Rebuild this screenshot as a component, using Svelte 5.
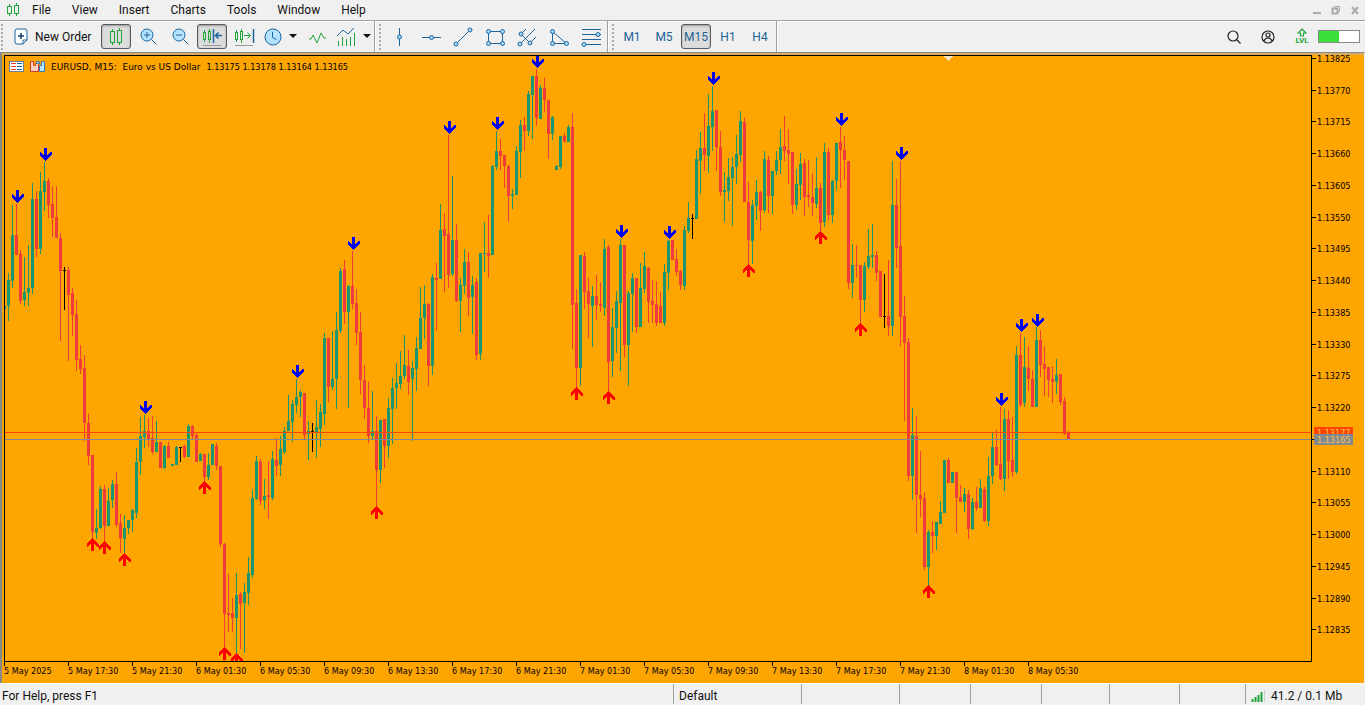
<script>
    let menus = ["File", "View", "Insert", "Charts", "Tools", "Window", "Help"]
    let timeframes = ["M1", "M5", "M15", "H1", "H4"]
    let panels = [98, 71, 71, 68, 70, 66]

    let activeFrame = "M15"
    let candleMode = true
    let shiftMode = true

    let drawTools = ["Vertical Line", "Horizontal Line", "Trendline", "Rectangle", "Pitchfork", "Triangle", "Fibonacci"]

    let prices = [
        [58, "1.13825"], [90, "1.13770"], [121, "1.13715"], [153, "1.13660"], [185, "1.13605"],
        [217, "1.13550"], [248, "1.13495"], [280, "1.13440"], [312, "1.13385"], [344, "1.13330"],
        [375, "1.13275"], [407, "1.13220"], [439, ""], [471, "1.13110"], [502, "1.13055"],
        [534, "1.13000"], [566, "1.12945"], [598, "1.12890"], [629, "1.12835"]
    ]

    let times = [
        "5 May 2025", "5 May 17:30", "5 May 21:30", "6 May 01:30", "6 May 05:30", "6 May 09:30",
        "6 May 13:30", "6 May 17:30", "6 May 21:30", "7 May 01:30", "7 May 05:30", "7 May 09:30",
        "7 May 13:30", "7 May 17:30", "7 May 21:30", "8 May 01:30", "8 May 05:30"
    ]

    // x centre and tip of each fractal
    let tops = [
        [17, 203], [45, 161], [145, 414], [297, 378], [353, 250], [449, 134], [497, 130], [537, 68],
        [621, 238], [669, 239], [713, 85], [841, 126], [901, 160], [1001, 406], [1021, 332], [1037, 327]
    ]
    let bottoms = [
        [92, 538], [104, 541], [124, 553], [204, 481], [224, 647], [236, 653], [376, 506], [576, 387],
        [608, 391], [748, 264], [820, 231], [860, 323], [928, 585]
    ]

    // colour (g up, r down, k doji), high, body top, body bottom, low; one candle every 4px
    let series = `
        g 306 306 309 309|g 273 280 306 321|g 205 235 281 288|r 204 235 255 255|r 250 254 301 304|g 257 292 300 306
        g 245 288 293 306|g 183 199 288 294|r 191 199 249 257|g 172 191 249 254|g 162 181 192 211|r 178 181 205 218
        r 186 204 218 237|r 186 217 238 238|r 233 238 271 341|k 267 270 271 310|r 267 270 295 361|r 288 293 315 336
        r 300 314 360 371|r 345 359 369 374|r 355 368 423 441|r 414 423 456 465|r 455 455 532 538|g 509 528 533 539
        g 486 489 528 529|r 485 489 526 542|g 488 501 526 526|g 480 484 500 508|r 472 484 525 527|r 514 523 538 553
        g 515 528 539 554|g 520 520 528 534|g 509 510 520 532|g 448 462 513 518|g 417 436 462 475|g 415 431 437 448
        r 418 431 439 447|r 416 438 452 454|g 421 442 452 452|r 442 442 468 468|g 445 446 468 469|r 442 446 458 458
        g 464 464 466 466|g 446 447 465 465|k 447 447 448 462|r 445 446 457 458|g 424 426 457 457|r 425 426 436 439
        r 433 435 462 462|g 453 454 461 461|r 454 454 477 482|g 453 465 477 480|g 444 444 465 465|r 443 446 466 470
        r 466 466 544 547|r 543 544 614 648|r 574 613 615 632|r 598 613 618 632|g 573 595 618 653|r 592 594 604 649
        g 583 592 603 653|g 557 573 593 605|g 490 498 575 578|g 456 461 499 500|r 459 462 501 505|g 479 496 500 509
        r 461 495 497 519|g 451 459 498 500|r 438 460 466 476|g 436 449 465 476|g 427 431 452 454|g 395 421 431 431
        g 400 404 422 442|g 379 397 405 413|g 390 392 397 417|r 393 393 435 440|g 421 431 434 460|k 423 431 432 452
        g 400 427 433 458|g 404 412 429 447|g 333 338 414 425|r 338 338 387 402|g 331 379 387 390|g 312 330 379 409
        g 268 271 331 333|r 260 269 312 324|g 285 286 312 408|r 251 286 304 309|r 289 303 333 345|r 312 332 380 394
        r 365 380 408 419|r 382 408 436 443|g 391 431 436 439|r 416 431 470 507|g 420 420 470 483|r 419 419 446 468
        g 398 408 446 458|g 378 388 409 444|g 363 383 388 409|g 351 376 384 389|g 335 365 376 379|r 350 366 382 395
        g 361 368 379 441|g 337 348 369 391|g 287 318 349 349|g 285 304 318 339|r 303 304 366 386|g 274 277 366 375
        r 263 278 280 331|g 204 230 279 279|r 213 229 236 292|r 135 234 275 288|g 176 240 274 276|r 224 240 301 302
        g 278 285 301 332|g 249 262 286 294|r 252 262 298 316|g 276 285 297 334|r 278 282 355 360|g 253 253 354 360
        g 222 253 254 272|r 215 253 256 278|g 165 166 255 255|g 131 151 167 170|r 139 151 156 170|r 155 155 166 188
        r 165 166 196 222|g 189 194 196 209|g 146 151 195 195|g 120 125 152 178|r 117 125 131 151|g 91 94 131 136
        g 76 76 95 139|r 69 76 118 126|g 85 88 119 119|r 78 88 100 112|r 100 100 134 159|g 116 117 134 140
        g 165 166 170 170|g 136 136 167 169|r 133 136 141 143|g 125 127 142 142|r 113 127 305 349|r 289 303 368 388
        g 255 255 368 386|r 252 256 292 309|r 278 291 304 338|g 286 296 306 347|r 275 296 305 320|r 282 304 306 312
        g 239 249 308 316|r 245 247 362 391|g 308 327 361 377|g 291 301 328 353|g 239 245 303 371|r 245 245 345 357
        g 291 293 345 386|g 273 278 294 332|r 278 278 327 333|g 263 288 327 327|g 252 266 289 293|r 267 268 302 323
        r 280 301 305 323|r 281 304 323 326|r 292 306 323 323|g 264 272 323 326|g 240 241 273 290|r 240 240 260 260
        r 249 259 272 276|r 270 271 285 290|g 226 230 286 290|g 202 218 231 233|k 214 218 219 239|g 150 159 219 219
        g 132 148 161 194|r 113 148 155 171|g 94 126 156 173|g 86 111 127 151|r 110 110 147 171|r 131 147 192 196
        g 172 190 192 222|g 158 177 191 201|g 157 167 178 226|g 135 154 167 184|g 111 121 155 162|r 118 122 202 202
        r 182 202 240 265|g 200 205 241 264|g 180 192 206 220|r 191 192 211 231|g 151 159 210 213|r 156 160 196 213
        g 171 171 196 214|g 151 160 171 175|g 129 147 160 174|r 116 146 151 161|r 129 150 154 184|r 152 152 205 214
        g 169 184 205 210|g 153 164 185 200|r 159 163 197 216|r 160 195 197 207|r 174 197 203 216|g 157 188 204 208
        r 183 188 223 232|g 143 152 222 227|r 148 152 215 220|g 180 181 215 223|g 143 143 181 190|r 127 142 150 188
        r 136 150 160 180|r 161 161 283 289|g 244 265 283 298|r 245 265 266 278|r 265 265 300 324|g 262 266 300 312
        g 229 256 267 269|g 224 255 257 268|r 251 255 273 281|r 271 271 317 317|k 274 316 317 328|r 260 316 326 336
        g 161 205 326 336|r 179 205 248 268|r 161 246 317 346|r 296 316 343 421|r 338 342 476 481|g 408 435 476 500
        r 416 436 495 533|r 451 495 499 517|r 492 498 567 570|g 530 532 567 586|r 521 532 536 553|g 522 522 536 550
        g 501 512 524 524|g 460 460 513 513|r 458 460 483 483|g 472 472 483 483|r 472 472 498 533|r 485 497 502 502
        g 488 494 502 512|r 490 494 529 539|g 498 502 529 530|r 487 502 508 511|g 479 488 508 508|r 487 489 521 522
        g 457 476 521 526|g 432 447 476 484|r 430 447 465 466|r 407 464 479 480|g 409 419 479 491|r 410 419 461 479
        r 417 460 472 477|g 346 355 472 474|r 333 355 405 407|g 337 367 403 407|r 346 368 379 391|r 370 379 407 407
        g 327 340 407 407|r 330 340 365 377|r 346 364 369 396|r 367 367 380 397|r 366 379 382 403|g 359 375 382 394
        r 374 374 402 405|r 397 401 434 435|r 431 432 439 440`

    let candles = series.trim().split(/[|\n]/).map((row, i) => {
        let [kind, high, top, bottom, low] = row.trim().split(" ")
        return { x: 4 + i * 4, kind, high: +high, top: +top, bottom: +bottom, low: +low }
    })
</script>

<div class="terminal">
    <header>
        <svg class="logo" width="14" height="16" viewBox="0 0 14 16">
            <path d="M3.5 2v2M3.5 12v2M10.5 1v2M10.5 11v3" />
            <rect x="1.5" y="4.5" width="4" height="7" />
            <rect x="8.5" y="3.5" width="4" height="8" />
        </svg>
        <nav>
            {#each menus as menu}
                <button type="button">{menu}</button>
            {/each}
        </nav>
        <div class="windowButtons">
            <button type="button" aria-label="Minimize">
                <svg width="10" height="10"><path d="M1 8h8" stroke-width="2" /></svg>
            </button>
            <button type="button" aria-label="Restore">
                <svg width="10" height="10"><path d="M3.5 3V1.5h5v5H7" /><rect x="1.5" y="3.5" width="5" height="5" stroke-width="2" /></svg>
            </button>
            <button type="button" aria-label="Close">
                <svg width="10" height="10"><path d="M2 2l6 7M8 2L2 9" stroke-width="2" /></svg>
            </button>
        </div>
    </header>

    <div class="toolbar">
        <div class="group">
            <span class="grip"></span>
            <button type="button" class="order">
                <svg width="14" height="18" viewBox="0 0 14 18">
                    <path class="sheet" d="M3 1h8q2 0 2 2v9l-4 4H3q-2 0-2-2V3q0-2 2-2z" />
                    <path d="M9 16v-4h4" /><path class="dark" d="M7 5v6M4 8h6" />
                </svg>
                New Order
            </button>
            <button type="button" class="tool" class:pressed={candleMode} aria-label="Candlesticks" on:click={() => candleMode = !candleMode}>
                <svg class="green" width="20" height="20"><path d="M6.5 2v3M6.5 15v3M13.5 1v3M13.5 15v3" /><rect x="4.5" y="4.5" width="4" height="11" /><rect x="11.5" y="3.5" width="4" height="12" /></svg>
            </button>
            <button type="button" class="tool" aria-label="Zoom In">
                <svg width="20" height="20"><circle class="glass" cx="9" cy="8" r="6" /><path d="M9 5v6M6 8h6M13.5 12.5l5 5" /></svg>
            </button>
            <button type="button" class="tool" aria-label="Zoom Out">
                <svg width="20" height="20"><circle class="glass" cx="9" cy="8" r="6" /><path d="M6 8h6M13.5 12.5l5 5" /></svg>
            </button>
            <button type="button" class="tool" class:pressed={shiftMode} aria-label="Auto Scroll" on:click={() => shiftMode = !shiftMode}>
                <svg width="22" height="20">
                    <g class="green"><path d="M3.5 3v2M3.5 13v2M8.5 2v2M8.5 13v3" /><rect x="2.5" y="5.5" width="2" height="7" /><rect x="7.5" y="4.5" width="2" height="8" /></g>
                    <path class="bold" d="M12.5 2v14M21 8.5h-6M17.500 5.5l-3 3 3 3" /><path class="faint" d="M2 18.5h18" />
                </svg>
            </button>
            <button type="button" class="tool" aria-label="Chart Shift">
                <svg width="22" height="20">
                    <g class="green"><path d="M3.5 3v2M3.5 13v2M8.5 2v2M8.5 13v3M11 8.5h6M14.5 5.5l3 3-3 3" /><rect x="2.5" y="5.5" width="2" height="7" /><rect x="7.5" y="4.5" width="2" height="8" /></g>
                    <path class="bold" d="M20.5 2v14" /><path class="faint" d="M2 18.5h18" />
                </svg>
            </button>
            <button type="button" class="tool wide" aria-label="Periods">
                <svg width="18" height="20"><circle class="glass" cx="9" cy="10" r="8" /><path d="M8.5 5v5.5l4 2" /></svg>
                <svg width="8" height="5"><path class="caret" d="M0 0h8L4 4z" /></svg>
            </button>
            <button type="button" class="tool" aria-label="Indicators">
                <svg class="green" width="20" height="20"><path d="M2 12h2l2-4 4 8 4-10 3 5h2" /></svg>
            </button>
            <button type="button" class="tool wide" aria-label="Templates">
                <svg width="20" height="20"><path d="M1 9l6-6 5 4 6-6" /><path class="green" d="M2.5 14v5M6.5 10v9M10.5 12v7M14.5 10v9M18.5 6v13" /></svg>
                <svg width="8" height="5"><path class="caret" d="M0 0h8L4 4z" /></svg>
            </button>
        </div>
        <div class="group">
            <span class="grip"></span>
            {#each drawTools as tool, i}
                <button type="button" class="tool" aria-label={tool}>
                    <svg class="draw" width="20" height="20">
                        {#if i === 0}
                            <path d="M10.5 1v18" /><circle cx="10.5" cy="10" r="2" />
                        {:else if i === 1}
                            <path d="M1 10.5h19" /><circle cx="10.5" cy="10.5" r="2" />
                        {:else if i === 2}
                            <path d="M3 17L17 3" /><circle cx="3" cy="17" r="2" /><circle cx="17" cy="3" r="2" />
                        {:else if i === 3}
                            <path d="M3.5 4.5h14v12h-14z" /><circle cx="3.5" cy="4.5" r="2" /><circle cx="17.5" cy="4.5" r="2" /><circle cx="3.5" cy="16.5" r="2" /><circle cx="17.5" cy="16.5" r="2" />
                        {:else if i === 4}
                            <path d="M4 7l5-5M4 7l9 9 6-6M3 17L18 2M8 12l5-5" /><circle cx="4" cy="7" r="2" /><circle cx="3" cy="17" r="2" /><circle cx="13" cy="16" r="2" />
                        {:else if i === 5}
                            <path d="M3.5 4.5v12h14z" /><circle cx="3.5" cy="4.5" r="2" /><circle cx="3.5" cy="16.5" r="2" /><circle cx="17.5" cy="16.5" r="2" />
                        {:else}
                            <path d="M1 2.5h19M1 7.5h19M1 12.5h19M1 17.5h19" /><circle cx="17" cy="7.5" r="2" /><circle cx="3" cy="17.5" r="2" />
                        {/if}
                    </svg>
                </button>
            {/each}
        </div>
        <div class="group">
            <span class="grip"></span>
            {#each timeframes as frame}
                <button type="button" class="tool frame" class:pressed={activeFrame === frame} on:click={() => activeFrame = frame}>{frame}</button>
            {/each}
        </div>
        <div class="account">
            <button type="button" aria-label="Search">
                <svg width="16" height="16"><circle cx="7" cy="7" r="5" /><path d="M10.5 10.5l4 4" /></svg>
            </button>
            <button type="button" aria-label="Account">
                <svg width="16" height="16"><circle cx="8" cy="8" r="6" /><circle cx="8" cy="6" r="2" /><path d="M4 12q1-3 4-3t4 3" /></svg>
            </button>
            <button type="button" class="level">
                <svg width="10" height="9"><path d="M5 1l4 4H6.5v3h-3V5H1z" /></svg>
                LVL
            </button>
            <div class="meter"><div></div></div>
        </div>
    </div>

    <main>
        <div class="plot">
            <svg class="canvas">
                <g transform="translate(-5 -56)">
                    {#each candles as c}
                        <rect class={c.kind} x={c.x} y={c.high} width="1" height={c.low - c.high} />
                        <rect class={c.kind} x={c.x - 1} y={c.top} width="3" height={c.bottom - c.top} />
                    {/each}
                    {#each tops as [x, y]}
                        <path class="top" transform="translate({x + .5} {y})" d="M-1.5 -13h3v8l3.2-4h1.3v3l-6 6l-6-6v-3h1.300l3.200 4z" />
                    {/each}
                    {#each bottoms as [x, y]}
                        <path class="bottom" transform="translate({x + .5} {y})" d="M-1.5 13h3v-8l3.2 4h1.3v-3l-6-6l-6 6v3h1.300l3.200-4z" />
                    {/each}
                    <path class="marker" d="M943 56h11l-5.5 5z" />
                </g>
                <rect class="ask" x="0" y="376" width="100%" height="1" />
                <rect class="bid" x="0" y="383" width="100%" height="1" />
            </svg>
            <div class="info">
                <svg width="15" height="11">
                    <rect class="paper" x=".5" y=".5" width="14" height="10" />
                    <path class="sellRows" d="M2 2.5h5M2 5.5h5M2 8.5h5" /><path class="buyRows" d="M8 2.5h5M8 5.5h5M8 8.5h5" />
                </svg>
                <svg width="15" height="11">
                    <path class="sell" d="M.5 .5h3v4h2v-2h3v8h-8z" /><path class="buy" d="M14.5 .5h-3v4h-2v6h5zM6.5 .5h3v2h-3z" />
                </svg>
                <span class="symbol">EURUSD, M15:&nbsp; Euro vs US Dollar</span>
                <span>1.13175 1.13178 1.13164 1.13165</span>
            </div>
        </div>
        <svg class="prices">
            <g transform="translate(0 -55)">
                {#each prices as [y, label]}
                    <rect x="0" {y} width="4" height="1" />
                    <text x="5" y={y + 4}>{label}</text>
                {/each}
                <rect class="askTag" x="2" y="427" width="39" height="12" />
                <text class="tagText" x="5" y="436">1.13177</text>
                <rect class="bidTag" x="2" y="434" width="39" height="11" />
                <text class="tagText" x="5" y="443">1.13165</text>
            </g>
        </svg>
        <svg class="times">
            {#each times as label, i}
                <rect x={i * 64} y="0" width="1" height="4" />
                <text x={i * 64} y="12">{label}</text>
            {/each}
        </svg>
    </main>

    <footer>
        <span class="help">For Help, press F1</span>
        <span class="profile">Default</span>
        {#each panels as width}
            <span style="width: {width}px"></span>
        {/each}
        <span class="traffic">
            <svg width="14" height="12">
                <path d="M1.5 12V9M4.5 12V7M7.5 12V5M10.5 12V2" /><path class="off" d="M13.5 12V0" />
            </svg>
            41.2 / 0.1 Mb
        </span>
    </footer>
</div>

<style>
    :global(body) {
        background: #f0f0f0;
    }

    .terminal {
        display: flex;
        flex-direction: column;
        height: 100vh;
        overflow: hidden;
        font-family: Roboto, "Open Sans", sans-serif;
        font-size: 12px;
        color: #111;
        background: #f0f0f0;
    }

    button {
        font: inherit;
        color: inherit;
        background: none;
        border: none;
        margin: 0;
        padding: 0;
    }

    svg {
        display: block;
        flex: none;
        fill: none;
        stroke: #1c66a0;
    }

    header {
        display: flex;
        align-items: center;
        flex: none;
        height: 20px;
        padding-left: 6px;
    }

    .logo, .green {
        stroke: #1fa53a;
    }

    nav {
        display: flex;
        flex: 1;
        gap: 1px;
        padding-left: 2px;
    }

    nav button {
        padding: 0 10px;
    }

    .windowButtons {
        display: flex;
        gap: 9px;
        padding-right: 5px;
    }

    .windowButtons svg {
        stroke: #aaa;
    }

    .toolbar {
        display: flex;
        flex: none;
        box-sizing: border-box;
        height: 32px;
        border-top: 1px solid #a0a0a0;
        box-shadow: inset 0 1px white;
    }

    .group {
        display: flex;
        align-items: center;
        gap: 2px;
        padding: 0 1px 0 4px;
        border-right: 1px solid #a0a0a0;
        box-shadow: 1px 0 white;
    }

    .group:first-child {
        padding: 0 1px;
    }

    .grip {
        width: 2px;
        height: 26px;
        margin-right: 1px;
        background: repeating-linear-gradient(#aaa 0 2px, transparent 2px 4px);
    }

    .order {
        display: flex;
        align-items: center;
        gap: 7px;
        width: 93px;
        padding-left: 8px;
        box-sizing: border-box;
        white-space: nowrap;
    }

    .tool {
        display: flex;
        align-items: center;
        justify-content: center;
        box-sizing: border-box;
        width: 30px;
        height: 25px;
        border: 1px solid transparent;
        border-radius: 3px;
    }

    .wide {
        width: 39px;
        gap: 7px;
    }

    .frame {
        color: #1c5f94;
    }

    .pressed {
        background: #dcdcdc;
        border-color: #5a5a5a;
        box-shadow: inset 0 1px 2px #999;
    }

    .sheet {
        fill: white;
    }

    .bold {
        stroke-width: 1.5;
    }

    .dark {
        stroke: #123c66;
        stroke-width: 1.5;
    }

    .glass {
        fill: #b5e2ff;
    }

    .draw circle {
        fill: #a8dcff;
    }

    .faint {
        stroke: #999;
    }

    .caret {
        fill: #111;
        stroke: none;
    }

    .account {
        display: flex;
        align-items: center;
        gap: 18px;
        margin-left: auto;
        padding-right: 5px;
    }

    .account svg {
        stroke: #222;
        stroke-width: 1.2;
    }

    .level {
        display: flex;
        flex-direction: column;
        align-items: center;
        width: 16px;
        font-size: 8px;
        line-height: 8px;
        font-weight: bold;
        color: #1fa53a;
    }

    .account .level svg {
        stroke: #1fa53a;
    }

    .meter {
        box-sizing: border-box;
        width: 42px;
        height: 13px;
        margin-left: -10px;
        border: 1px solid #888;
        background: white;
    }

    .meter div {
        width: 50%;
        height: 100%;
        background: #3be03b;
    }

    main {
        display: grid;
        flex: 1;
        min-height: 0;
        grid-template-columns: 1fr 52px;
        grid-template-rows: 1fr 21px;
        padding: 2px 0 0 2px;
        border: solid #888;
        border-width: 1px 0 0 2px;
        border-right: 1px solid #f0f0f0;
        background: orange;
        box-shadow: inset 0 2px #d9ac5e;
        font-family: "DejaVu Sans Condensed", "DejaVu Sans", sans-serif;
        font-size: 9px;
    }

    .plot {
        position: relative;
        border: 1px solid black;
        min-height: 0;
    }

    .canvas {
        position: absolute;
        width: 100%;
        height: 100%;
        stroke: none;
        shape-rendering: crispEdges;
    }

    .g {
        fill: #1d956f;
    }

    .r {
        fill: #f03c3a;
    }

    .k {
        fill: black;
    }

    .top {
        fill: #0000f0;
    }

    .bottom {
        fill: red;
    }

    .marker {
        fill: #f4e4c0;
    }

    .ask, .askTag {
        fill: #ff4500;
    }

    .bid, .bidTag {
        fill: #808a90;
    }

    .info {
        position: absolute;
        top: 5px;
        left: 4px;
        display: flex;
        align-items: center;
        gap: 6px;
        white-space: nowrap;
        color: black;
    }

    .symbol {
        font-family: "DejaVu Sans", sans-serif;
    }

    .paper {
        fill: white;
        stroke: #6a7a90;
    }

    .sellRows {
        stroke: #e03c28;
    }

    .buyRows {
        stroke: #1864a8;
    }

    .sell {
        fill: #ffd0c0;
        stroke: #d04030;
    }

    .buy {
        fill: #b5e2ff;
        stroke: #3878a8;
    }

    .prices, .times {
        width: 100%;
        height: 100%;
        overflow: visible;
        fill: black;
        stroke: none;
    }

    .times {
        grid-column: 1 / 3;
    }

    .tagText {
        fill: #ffc04d;
    }

    footer {
        display: flex;
        flex: none;
        align-items: center;
        height: 22px;
        box-shadow: inset 0 1px white;
    }

    footer span {
        display: flex;
        align-items: center;
        box-sizing: border-box;
        height: 20px;
        padding: 3px 0 0 5px;
        border-left: 1px solid #a0a0a0;
    }

    footer .help {
        flex: 1;
        padding-left: 2px;
        border: none;
    }

    footer .profile {
        width: 128px;
    }

    .traffic {
        width: 120px;
        gap: 6px;
    }

    .traffic svg {
        stroke: #1fa53a;
        stroke-width: 2;
    }

    .traffic .off {
        stroke: #ccc;
        stroke-width: 1;
    }
</style>
